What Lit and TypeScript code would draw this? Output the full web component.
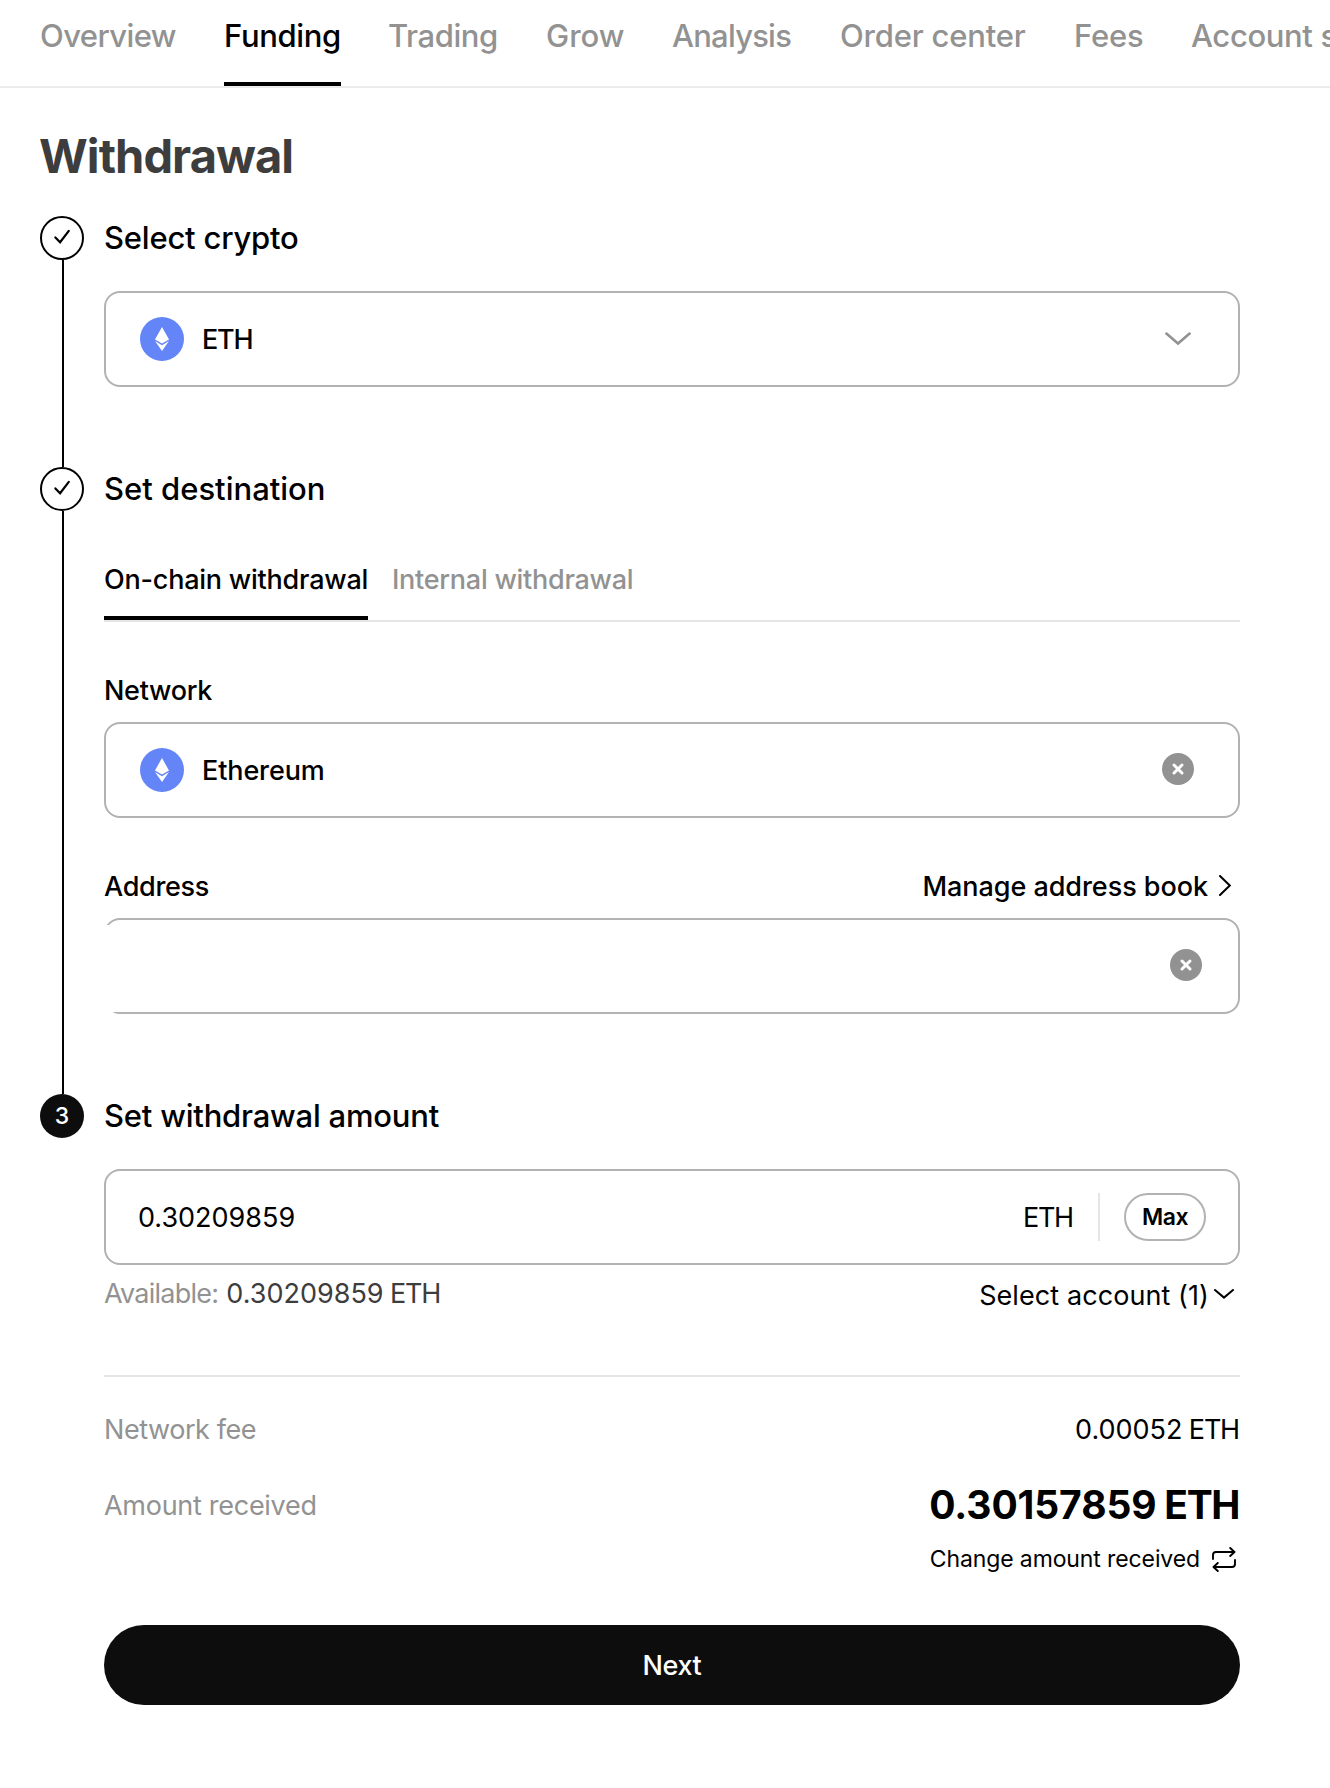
import { LitElement, html, css } from "lit";
import { customElement, property } from "lit/decorators.js";
import { classMap } from "lit/directives/class-map.js";

const ethIcon = html`<svg class="coin" width="44" height="44" viewBox="0 0 44 44">
  <circle cx="22" cy="22" r="22" fill="#6385f7"></circle>
  <path d="M22 10l7 12.6-7 4-7-4z" fill="#fff"></path>
  <path d="M15 24.1l7 4.1 7-4.1L22 34z" fill="#fff"></path>
</svg>`;

const clearIcon = html`<svg class="clear" width="32" height="32" viewBox="0 0 32 32">
  <circle cx="16" cy="16" r="16" fill="#929292"></circle>
  <path d="M12 12l8 8M20 12l-8 8" fill="none" stroke="#fff" stroke-width="3" stroke-linecap="round"></path>
</svg>`;

/** One numbered step: marker and connecting rail on the left, heading and content on the right. */
@customElement("withdraw-step")
export class WithdrawStep extends LitElement {
  @property({ type: Number }) number = 1;
  @property({ type: Boolean }) done = false;
  @property({ type: Boolean }) last = false;

  static styles = css`
    :host {
      display: grid;
      grid-template-columns: 44px 1136px;
      column-gap: 20px;
    }
    .rail {
      display: flex;
      flex-direction: column;
    }
    .marker {
      box-sizing: border-box;
      width: 44px;
      height: 44px;
      border-radius: 50%;
      display: flex;
      align-items: center;
      justify-content: center;
      background: #0d0d0d;
      color: #fff;
      font-size: 23px;
      font-weight: 500;
      line-height: 44px;
    }
    .marker.done {
      border: 2px solid #000;
      background: #fff;
    }
    .line {
      flex: 1;
      width: 2px;
      margin-left: 22px;
      background: #000;
    }
    .line.hidden {
      display: none;
    }
    svg {
      display: block;
    }
  `;

  render() {
    return html`
      <div class="rail">
        <div class=${classMap({ marker: true, done: this.done })}>
          ${this.done
            ? html`<svg width="40" height="40" viewBox="0 0 40 40">
                <path d="M13.4 19.4l4.7 4.8L26.8 12.8" fill="none" stroke="#000" stroke-width="2.2" stroke-linecap="round"></path>
              </svg>`
            : this.number}
        </div>
        <div class=${classMap({ line: true, hidden: this.last })}></div>
      </div>
      <div><slot></slot></div>
    `;
  }
}

@customElement("app-root")
export class AppRoot extends LitElement {
  static styles = css`
    :host {
      display: block;
      min-height: 1788px;
      background: #fff;
      color: #000;
      font-family: Inter, "Liberation Sans", sans-serif;
      overflow: hidden;
    }
    svg {
      display: block;
      flex: none;
    }
    .nav {
      display: grid;
      grid-template-columns: 136px 116px 110px 78px 120px 186px 69px 139px;
      column-gap: 48px;
      height: 86px;
      padding-left: 40px;
      border-bottom: 2px solid #ebebeb;
      overflow: hidden;
    }
    .nav-tab {
      box-sizing: border-box;
      height: 86px;
      font-size: 31px;
      font-weight: 500;
      line-height: 72px;
      letter-spacing: -0.2px;
      color: #929292;
      white-space: nowrap;
    }
    .nav-tab.active {
      width: 117px;
      color: #000;
      border-bottom: 4px solid #000;
      letter-spacing: -0.35px;
    }
    .nav-tab.overview { letter-spacing: -0.6px; }
    .nav-tab.trading { letter-spacing: -0.42px; }
    .nav-tab.grow { letter-spacing: 0; }
    .nav-tab.analysis { letter-spacing: -0.78px; }
    .nav-tab.account { letter-spacing: -0.37px; }

    .page {
      padding: 38px 0 0 40px;
    }
    h1 {
      margin: 0 0 30px -1px;
      font-size: 47px;
      font-weight: 700;
      line-height: 60px;
      letter-spacing: -0.92px;
      color: #3d3d3d;
    }
    h2 {
      margin: 0;
      font-size: 31px;
      font-weight: 500;
      line-height: 44px;
      letter-spacing: -0.21px;
    }
    h2.destination { letter-spacing: 0; }

    .box {
      box-sizing: border-box;
      position: relative;
      display: flex;
      align-items: center;
      height: 96px;
      padding-left: 34px;
      border: 2px solid #b2b2b2;
      border-radius: 16px;
      font-size: 27px;
      font-weight: 500;
    }
    .box .coin { margin-right: 18px; }
    .box .value { flex: 1; }
    .box .network { letter-spacing: -0.12px; }
    .box .chevron { margin: 0 47px 1px 0; }
    .box .clear { margin: 0 44px 2px 0; }
    .box.address .clear { margin-right: 36px; }
    .crypto, .amount { margin-top: 31px; }
    .crypto, .address { margin-bottom: 80px; }
    .ticker { letter-spacing: -1.2px; }
    .redaction {
      position: absolute;
      left: -2px;
      top: 5px;
      bottom: 0;
      width: 60px;
      background: #fff;
    }

    .tabs {
      display: flex;
      gap: 24px;
      margin-top: 51px;
      border-bottom: 2px solid #e5e5e5;
    }
    .tab {
      padding-bottom: 18px;
      border-bottom: 4px solid transparent;
      font-size: 27px;
      font-weight: 500;
      line-height: 36px;
      letter-spacing: -0.26px;
      color: #929292;
      white-space: nowrap;
    }
    .tab.active {
      color: #000;
      width: 264px;
      border-color: #000;
      letter-spacing: -0.22px;
    }

    .row {
      display: flex;
      justify-content: space-between;
      font-size: 27px;
      line-height: 36px;
    }
    .row.label {
      margin: 51px 0 13px;
      font-weight: 500;
      letter-spacing: -0.3px;
    }
    .link {
      display: flex;
      align-items: center;
    }
    .book {
      gap: 11px;
      padding-right: 9px;
      letter-spacing: -0.05px;
    }
    .book svg { margin-bottom: 4px; }

    .box.amount {
      padding: 0 32px;
      font-weight: 400;
    }
    .unit {
      width: 51px;
      letter-spacing: -1.3px;
    }
    .split {
      width: 2px;
      height: 48px;
      margin: 0 24px;
      background: #e5e5e5;
    }
    .max {
      box-sizing: border-box;
      width: 82px;
      height: 48px;
      border: 2px solid #b2b2b2;
      border-radius: 24px;
      text-align: center;
      font-size: 23px;
      font-weight: 600;
      line-height: 45px;
      letter-spacing: -0.5px;
    }

    .row.available { margin-top: 11px; }
    .muted {
      color: #929292;
      letter-spacing: -0.35px;
    }
    .muted.avail { letter-spacing: -0.75px; }
    .muted.fee-name { letter-spacing: -0.43px; }
    .muted.received-name { letter-spacing: -0.28px; }
    .balance {
      color: #3d3d3d;
      margin-left: 8px;
    }
    .select {
      gap: 5px;
      padding-right: 6px;
      letter-spacing: 0.08px;
      height: 36px;
      margin-top: 2px;
    }
    .select svg { margin-bottom: 5px; }

    .summary {
      margin-top: 61px;
      border-top: 2px solid #e5e5e5;
      padding-top: 35px;
    }
    .fee { padding-right: 1px; }
    .received { margin-top: 33px; }
    .received .muted { padding-top: 7px; }
    .total {
      padding-right: 1px;
      font-size: 39px;
      font-weight: 700;
      line-height: 48px;
      letter-spacing: -0.1px;
      text-align: right;
    }
    .total .ticker { letter-spacing: -1.4px; }
    .change {
      justify-content: flex-end;
      gap: 12px;
      margin-top: 16px;
      padding-right: 4px;
      font-size: 23px;
      line-height: 28px;
      letter-spacing: -0.11px;
    }
    .next {
      height: 80px;
      margin-top: 52px;
      border-radius: 40px;
      background: #0d0d0d;
      color: #fff;
      text-align: center;
      font-size: 27px;
      font-weight: 500;
      line-height: 82px;
      letter-spacing: -0.4px;
    }
  `;

  private navTabs: [string, string][] = [
    ["Overview", "overview"],
    ["Funding", "active"],
    ["Trading", "trading"],
    ["Grow", "grow"],
    ["Analysis", "analysis"],
    ["Order center", "order"],
    ["Fees", "fees"],
    ["Account statement", "account"],
  ];

  render() {
    return html`
      <nav class="nav">
        ${this.navTabs.map(([label, name]) => html`<div class="nav-tab ${name}">${label}</div>`)}
      </nav>
      <main class="page">
        <h1>Withdrawal</h1>

        <withdraw-step number="1" done>
          <h2>Select crypto</h2>
          <div class="box crypto">
            ${ethIcon}
            <span class="value ticker">ETH</span>
            <svg class="chevron" width="26" height="14" viewBox="0 0 26 14">
              <path d="M1.4 1.6L13 11.6 24.6 1.6" fill="none" stroke="#929292" stroke-width="2.6" stroke-linecap="round"></path>
            </svg>
          </div>
        </withdraw-step>

        <withdraw-step number="2" done>
          <h2 class="destination">Set destination</h2>
          <div class="tabs">
            <div class="tab active">On-chain withdrawal</div>
            <div class="tab">Internal withdrawal</div>
          </div>
          <div class="row label"><span>Network</span></div>
          <div class="box">
            ${ethIcon}
            <span class="value network">Ethereum</span>
            ${clearIcon}
          </div>
          <div class="row label">
            <span>Address</span>
            <span class="link book">
              Manage address book
              <svg width="12" height="21" viewBox="0 0 12 21">
                <path d="M1 1l9.8 9.5L1 20" fill="none" stroke="#000" stroke-width="2" stroke-linecap="round"></path>
              </svg>
            </span>
          </div>
          <div class="box address">
            <span class="value"></span>
            ${clearIcon}
            <div class="redaction"></div>
          </div>
        </withdraw-step>

        <withdraw-step number="3" last>
          <h2>Set withdrawal amount</h2>
          <div class="box amount">
            <span class="value">0.30209859</span>
            <span class="unit">ETH</span>
            <span class="split"></span>
            <span class="max">Max</span>
          </div>
          <div class="row available">
            <span><span class="muted avail">Available:</span><span class="balance">0.30209859<span class="ticker"> ETH</span></span></span>
            <span class="link select">
              Select account (1)
              <svg width="20" height="10" viewBox="0 0 20 10">
                <path d="M1 1l9 7.6L19 1" fill="none" stroke="#000" stroke-width="2" stroke-linecap="round"></path>
              </svg>
            </span>
          </div>
          <div class="summary">
            <div class="row">
              <span class="muted fee-name">Network fee</span>
              <span class="fee">0.00052<span class="ticker"> ETH</span></span>
            </div>
            <div class="row received">
              <span class="muted received-name">Amount received</span>
              <div>
                <div class="total">0.30157859<span class="ticker"> ETH</span></div>
                <div class="link change">
                  Change amount received
                  <svg width="24" height="25" viewBox="0 0 24 25">
                    <g fill="none" stroke="#000" stroke-width="1.9" stroke-linecap="round" stroke-linejoin="round">
                      <path d="M1 12V8a3 3 0 0 1 3-3h18M18.2 1l4.3 4-4.3 4"></path>
                      <path d="M23 13v4a3 3 0 0 1-3 3H2M5.8 16l-4.3 4 4.3 4"></path>
                    </g>
                  </svg>
                </div>
              </div>
            </div>
          </div>
          <div class="next">Next</div>
        </withdraw-step>
      </main>
    `;
  }
}
